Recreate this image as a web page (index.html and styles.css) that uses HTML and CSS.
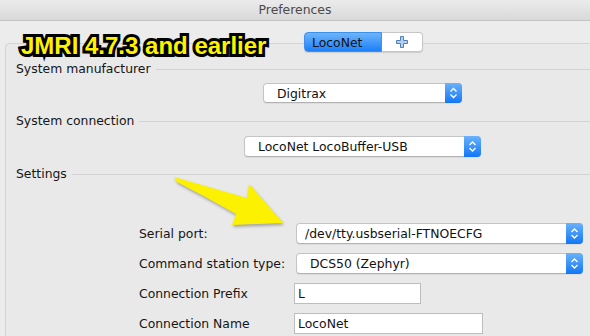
FILE: index.html
```html
<!DOCTYPE html>
<html lang="en">
<head>
    <meta charset="UTF-8">
    <title>Preferences</title>
    <link rel="stylesheet" href="styles.css">
</head>
<body>
    <div class="window">
        <div class="titlebar">Preferences</div>

        <div class="tabs">
            <div class="tab tab-active">LocoNet</div>
            <div class="tab tab-add">
                <svg width="12" height="12" viewBox="0 0 12 12">
                    <path d="M4.5 0.5h3v4h4v3h-4v4h-3v-4h-4v-3h4z" fill="#b3d0f0" stroke="#4f7fb8" stroke-width="1"/>
                </svg>
            </div>
        </div>

        <div class="panel">
            <div class="group-head"><span>System manufacturer</span><span class="rule"></span></div>
            <div class="combo combo-maker">
                <span class="combo-text">Digitrax</span>
                <span class="combo-arrows"><svg width="17" height="20" viewBox="0 0 17 20"><path d="M5.5 8.5l3-3 3 3M5.5 11.5l3 3 3-3" fill="none" stroke="#fff" stroke-width="1.4"/></svg></span>
            </div>

            <div class="group-head head-connection"><span>System connection</span><span class="rule"></span></div>
            <div class="combo combo-connection">
                <span class="combo-text">LocoNet LocoBuffer-USB</span>
                <span class="combo-arrows"><svg width="17" height="21" viewBox="0 0 17 21"><path d="M5.5 9l3-3 3 3M5.5 12l3 3 3-3" fill="none" stroke="#fff" stroke-width="1.4"/></svg></span>
            </div>

            <div class="group-head head-settings"><span>Settings</span><span class="rule"></span></div>

            <div class="form">
                <label>Serial port:</label>
                <div class="combo combo-field">
                    <span class="combo-text combo-edit">/dev/tty.usbserial-FTNOECFG</span>
                    <span class="combo-arrows"><svg width="17" height="21" viewBox="0 0 17 21"><path d="M5.5 9l3-3 3 3M5.5 12l3 3 3-3" fill="none" stroke="#fff" stroke-width="1.4"/></svg></span>
                </div>

                <label>Command station type:</label>
                <div class="combo combo-field">
                    <span class="combo-text">DCS50 (Zephyr)</span>
                    <span class="combo-arrows"><svg width="17" height="21" viewBox="0 0 17 21"><path d="M5.5 9l3-3 3 3M5.5 12l3 3 3-3" fill="none" stroke="#fff" stroke-width="1.4"/></svg></span>
                </div>

                <label>Connection Prefix</label>
                <div class="field field-prefix">L</div>

                <label>Connection Name</label>
                <div class="field field-name">LocoNet</div>
            </div>
        </div>

        <div class="callout">JMRI 4.7.3 and earlier</div>

        <svg class="pointer" width="590" height="336" viewBox="0 0 590 336">
            <path d="M174 177 L247 198 L249 184 L283 223 L232 225 L236 214 Q206 197 177 182 Z" fill="#fbf100"/>
        </svg>
    </div>
</body>
</html>
```

FILE: styles.css
```css
* {
    margin: 0;
    padding: 0;
    box-sizing: border-box;
}

body {
    font-family: 'DejaVu Sans', sans-serif;
    font-size: 12.4px;
    color: #151515;
    background-color: #ececec;
    overflow: hidden;
}

.window {
    position: relative;
    width: 590px;
    height: 336px;
    overflow: hidden;
}

.titlebar {
    height: 21px;
    line-height: 20px;
    text-align: center;
    color: #4a4a4a;
    background: linear-gradient(#ebebeb, #d9d9d9);
    border-bottom: 1px solid #c2c2c2;
}

.tabs {
    position: relative;
    z-index: 1;
    display: flex;
    width: 119px;
    height: 20px;
    margin: 11px 0 0 304px;
    border-radius: 4px;
    box-shadow: 0 1px 1px rgba(0,0,0,0.12);
}

.tab {
    height: 20px;
    line-height: 19px;
}

.tab-active {
    width: 78px;
    padding-left: 7px;
    color: #111;
    background: linear-gradient(#6db4fb, #1c80f8);
    border: 1px solid #3d8ff0;
    border-radius: 4px 0 0 4px;
}

.tab-add {
    flex: 1;
    display: flex;
    justify-content: center;
    align-items: center;
    background-color: #fff;
    border: 1px solid #c6c6c6;
    border-left: none;
    border-radius: 0 4px 4px 0;
}

.panel {
    height: 320px;
    margin: -9px 0 0 5px;
    padding: 17px 0 0 10px;
    background-color: #e9e9e9;
    border-top: 1px solid #d3d3d3;
    border-left: 1px solid #d3d3d3;
    border-radius: 5px 0 0 0;
}

.group-head {
    display: flex;
    align-items: center;
    height: 16px;
    line-height: 16px;
}

.rule {
    flex: 1;
    height: 1px;
    margin-left: 5px;
    background-color: #d2d2d2;
}

.head-connection {
    margin-top: 10px;
}

.head-settings {
    margin-top: 9px;
}

.combo {
    display: flex;
    align-items: center;
    height: 20px;
    background-color: #fff;
    border: 1px solid #c4c4c4;
    border-bottom-color: #b2b2b2;
    border-radius: 4px;
    box-shadow: 0 1px 1px rgba(0,0,0,0.06);
}

.combo-text {
    flex: 1;
    padding-left: 13px;
    color: #111;
    white-space: nowrap;
}

.combo-edit {
    padding-left: 8px;
}

.combo-arrows {
    align-self: stretch;
    display: flex;
    width: 17px;
    margin: -1px -1px -1px 0;
    background: linear-gradient(#6ab2fb, #1277f6);
    border-radius: 0 4px 4px 0;
}

.combo-maker {
    width: 199px;
    margin: 6px 0 0 247px;
}

.combo-connection {
    width: 237px;
    height: 21px;
    margin: 7px 0 0 228px;
}

.form {
    display: grid;
    grid-template-columns: 155px auto;
    grid-auto-rows: 21px;
    row-gap: 9px;
    align-items: center;
    margin: 41px 0 0 123px;
}

.form label {
    white-space: nowrap;
}

.combo-field {
    width: 287px;
    height: 21px;
    margin-left: 2px;
}

.field {
    height: 21px;
    line-height: 19px;
    padding-left: 3px;
    background-color: #fff;
    border: 1px solid #bdbdbd;
}

.field-prefix {
    width: 127px;
}

.field-name {
    width: 189px;
}

.callout {
    position: absolute;
    left: 21px;
    top: 34px;
    font-family: 'Liberation Sans', Arial, sans-serif;
    font-weight: bold;
    font-size: 24px;
    line-height: 24px;
    color: #fff200;
    -webkit-text-stroke: 6px #000;
    paint-order: stroke fill;
    text-shadow: 1px 2px 2px rgba(0,0,0,0.55);
    white-space: nowrap;
}

.pointer {
    position: absolute;
    left: 0;
    top: 0;
    filter: drop-shadow(1px 2px 1.5px rgba(0,0,0,0.3));
}
```
